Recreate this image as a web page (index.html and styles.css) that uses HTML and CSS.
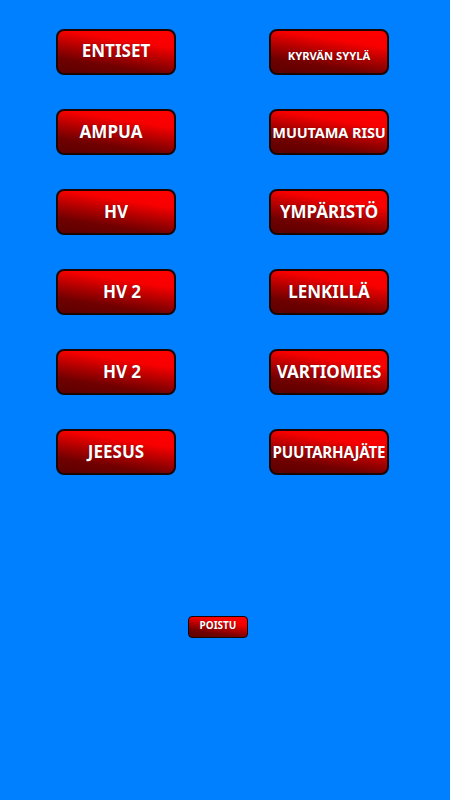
FILE: index.html
```html
<!DOCTYPE html>
<html>
<head>
<meta charset="utf-8">
<link rel="stylesheet" href="styles.css">
</head>
<body>
<div class="page">
  <div class="grid">
    <button class="btn up">ENTISET</button>
    <button class="btn small">KYRVÄN SYYLÄ</button>
    <button class="btn shift-l">AMPUA</button>
    <button class="btn mid">MUUTAMA RISU</button>
    <button class="btn">HV</button>
    <button class="btn">YMPÄRISTÖ</button>
    <button class="btn shift-r">HV 2</button>
    <button class="btn">LENKILLÄ</button>
    <button class="btn shift-r">HV 2</button>
    <button class="btn">VARTIOMIES</button>
    <button class="btn">JEESUS</button>
    <button class="btn mid wide">PUUTARHAJÄTE</button>
  </div>
  <div class="exit-row">
    <button class="btn exit">POISTU</button>
  </div>
</div>
</body>
</html>
```
FILE: styles.css
```css
html, body {
  margin: 0;
  padding: 0;
  background: #0080ff;
  height: 100%;
}
.page {
  padding-top: 29px;
  display: flex;
  flex-direction: column;
}
.grid {
  display: grid;
  grid-template-columns: 120px 120px;
  column-gap: 93px;
  row-gap: 34px;
  padding-left: 56px;
}
.btn {
  box-sizing: border-box;
  width: 120px;
  height: 46px;
  border: 2px solid #1a0505;
  border-radius: 8px;
  background: linear-gradient(189deg, #ff0000 0%, #f80000 28%, #b00000 52%, #700000 75%, #5c0000 100%);
  color: #ffffff;
  font-family: "Noto Sans", "Open Sans", sans-serif;
  font-weight: bold;
  font-size: 17px;
  text-shadow: 0 0 1px rgba(60,0,0,0.8);
  padding: 0 0 1px 0;
  margin: 0;
  white-space: nowrap;
  display: flex;
  align-items: center;
  justify-content: center;
}
.up { padding-bottom: 4px; }
.small { font-size: 11.2px; padding-top: 6px; padding-bottom: 0; }
.mid { font-size: 14.5px; letter-spacing: -0.1px; padding-bottom: 0; }
.wide { font-size: 15.2px; letter-spacing: -0.2px; }
.shift-l { padding-right: 10px; }
.shift-r { padding-left: 12px; }
.exit-row {
  display: flex;
  padding-left: 188px;
  padding-top: 141px;
}
.exit {
  width: 60px;
  height: 22px;
  border-width: 1px;
  border-radius: 4px;
  font-size: 10px;
  padding-bottom: 4px;
}
```
